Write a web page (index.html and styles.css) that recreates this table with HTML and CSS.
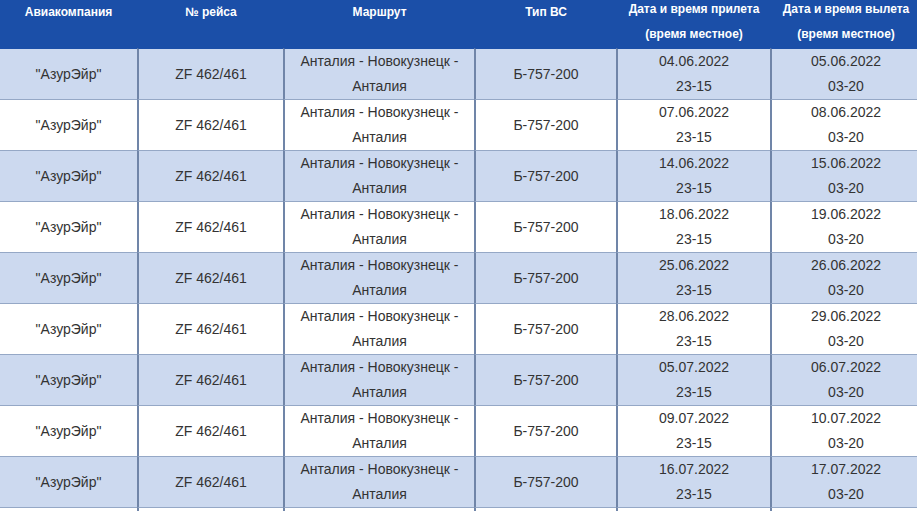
FILE: index.html
```html
<!DOCTYPE html>
<html lang="ru">
<head>
<meta charset="utf-8">
<link rel="stylesheet" href="styles.css">
</head>
<body>
<table class="flights">
  <colgroup>
    <col class="c1"><col class="c2"><col class="c3"><col class="c4"><col class="c5"><col class="c6">
  </colgroup>
  <thead>
    <tr>
      <th>Авиакомпания</th>
      <th>№ рейса</th>
      <th>Маршрут</th>
      <th>Тип ВС</th>
      <th><div class="two">Дата и время прилета<br>(время местное)</div></th>
      <th><div class="two">Дата и время вылета<br>(время местное)</div></th>
    </tr>
  </thead>
  <tbody>
    <tr class="shade"><td>"АзурЭйр"</td><td>ZF 462/461</td><td>Анталия - Новокузнецк - Анталия</td><td>Б-757-200</td><td>04.06.2022<br>23-15</td><td>05.06.2022<br>03-20</td></tr>
    <tr><td>"АзурЭйр"</td><td>ZF 462/461</td><td>Анталия - Новокузнецк - Анталия</td><td>Б-757-200</td><td>07.06.2022<br>23-15</td><td>08.06.2022<br>03-20</td></tr>
    <tr class="shade"><td>"АзурЭйр"</td><td>ZF 462/461</td><td>Анталия - Новокузнецк - Анталия</td><td>Б-757-200</td><td>14.06.2022<br>23-15</td><td>15.06.2022<br>03-20</td></tr>
    <tr><td>"АзурЭйр"</td><td>ZF 462/461</td><td>Анталия - Новокузнецк - Анталия</td><td>Б-757-200</td><td>18.06.2022<br>23-15</td><td>19.06.2022<br>03-20</td></tr>
    <tr class="shade"><td>"АзурЭйр"</td><td>ZF 462/461</td><td>Анталия - Новокузнецк - Анталия</td><td>Б-757-200</td><td>25.06.2022<br>23-15</td><td>26.06.2022<br>03-20</td></tr>
    <tr><td>"АзурЭйр"</td><td>ZF 462/461</td><td>Анталия - Новокузнецк - Анталия</td><td>Б-757-200</td><td>28.06.2022<br>23-15</td><td>29.06.2022<br>03-20</td></tr>
    <tr class="shade"><td>"АзурЭйр"</td><td>ZF 462/461</td><td>Анталия - Новокузнецк - Анталия</td><td>Б-757-200</td><td>05.07.2022<br>23-15</td><td>06.07.2022<br>03-20</td></tr>
    <tr><td>"АзурЭйр"</td><td>ZF 462/461</td><td>Анталия - Новокузнецк - Анталия</td><td>Б-757-200</td><td>09.07.2022<br>23-15</td><td>10.07.2022<br>03-20</td></tr>
    <tr class="shade"><td>"АзурЭйр"</td><td>ZF 462/461</td><td>Анталия - Новокузнецк - Анталия</td><td>Б-757-200</td><td>16.07.2022<br>23-15</td><td>17.07.2022<br>03-20</td></tr>
    <tr class="blank"><td></td><td></td><td></td><td></td><td></td><td></td></tr>
  </tbody>
</table>
</body>
</html>
```

FILE: styles.css
```css
html, body {
  margin: 0;
  padding: 0;
  background: #ffffff;
  overflow: hidden;
}

.flights {
  width: 920px;
  table-layout: fixed;
  border-collapse: separate;
  border-spacing: 0;
  font-family: "Liberation Sans", Arial, sans-serif;
}

.c1 { width: 137px; }
.c2 { width: 146px; }
.c3 { width: 191px; }
.c4 { width: 142px; }
.c5 { width: 154px; }
.c6 { width: 150px; }

.flights th {
  background: #1b4fa8;
  color: #ffffff;
  font-size: 12px;
  font-weight: bold;
  line-height: 25px;
  height: 48px;
  padding: 0;
  text-align: center;
  vertical-align: top;
  border-left: 2px solid #1b4fa8;
  white-space: nowrap;
}

.flights th:first-child,
.flights td:first-child {
  border-left: 0;
}

.flights th .two {
  margin-top: -3px;
}

.flights td {
  font-size: 14px;
  line-height: 25px;
  color: #333333;
  text-align: center;
  vertical-align: middle;
  padding: 0 4px;
  border-top: 1px solid #95a8c6;
  border-left: 2px solid #7085a8;
}

.flights tbody tr:first-child td {
  border-top: 1px solid #1b4fa8;
}

.flights tr.shade td {
  background: #ccd9ef;
}

.flights tr.blank td {
  height: 50px;
}
```
